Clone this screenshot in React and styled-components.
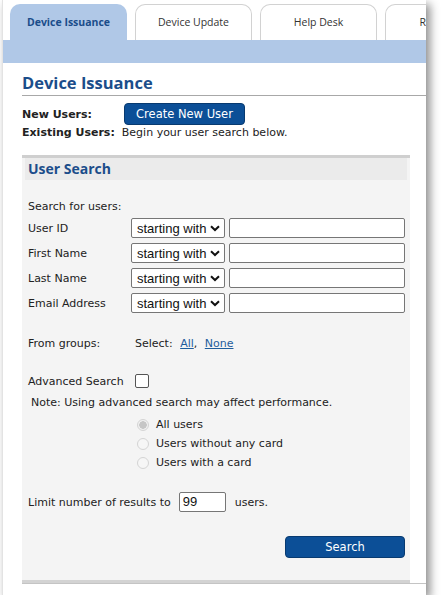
import React from 'react'
import styled, { createGlobalStyle } from 'styled-components'

const GlobalStyle = createGlobalStyle`
  html, body {
    margin: 0;
    padding: 0;
    background: #fff;
  }
  body {
    font-family: "DejaVu Sans", Verdana, sans-serif;
    font-size: 11px;
    color: #222;
  }
`

const tabs = ['Device Issuance', 'Device Update', 'Help Desk', 'Reporting']

const fields = ['User ID', 'First Name', 'Last Name', 'Email Address']

const radios = [
  { label: 'All users', checked: true },
  { label: 'Users without any card' },
  { label: 'Users with a card' },
]

function Chevron() {
  return (
    <svg width="10" height="7" viewBox="0 0 10 7">
      <path d="M1 1.2 L5 5 L9 1.2" fill="none" stroke="#111" strokeWidth="2" />
    </svg>
  )
}

function App() {
  return (
    <>
      <GlobalStyle />
      <Page>
        <TabBar>
          {tabs.map((t, i) => (
            <Tab key={t} active={i === 0}>{t}</Tab>
          ))}
        </TabBar>
        <Band />
        <Main>
          <Title>Device Issuance</Title>
          <NewRow>
            <BoldLabel>New Users:</BoldLabel>
            <CreateButton>Create New User</CreateButton>
          </NewRow>
          <ExistingRow>
            <b>Existing Users:</b>&nbsp; Begin your user search below.
          </ExistingRow>

          <Panel>
            <PanelHeader>User Search</PanelHeader>
            <PanelBody>
              <Line>Search for users:</Line>
              <FieldGrid>
                {fields.map((f) => (
                  <React.Fragment key={f}>
                    <FieldLabel>{f}</FieldLabel>
                    <SelectBox>
                      <span>starting with</span>
                      <Chevron />
                    </SelectBox>
                    <TextBox />
                  </React.Fragment>
                ))}
              </FieldGrid>

              <GroupRow>
                <GroupLabel>From groups:</GroupLabel>
                <span>Select:&nbsp;</span>
                <Link>All</Link>,&nbsp;
                <Link>None</Link>
              </GroupRow>

              <AdvRow>
                <GroupLabel>Advanced Search</GroupLabel>
                <Check />
              </AdvRow>
              <Note>Note: Using advanced search may affect performance.</Note>

              <RadioList>
                {radios.map((r) => (
                  <RadioRow key={r.label}>
                    <Radio checked={r.checked} />
                    <span>{r.label}</span>
                  </RadioRow>
                ))}
              </RadioList>

              <LimitRow>
                Limit number of results to
                <LimitInput>99</LimitInput>
                users.
              </LimitRow>

              <ButtonRow>
                <SearchButton>Search</SearchButton>
              </ButtonRow>
            </PanelBody>
          </Panel>
          <BottomRule />
        </Main>
      </Page>
    </>
  )
}

export default App

const Page = styled.div`
  width: 423px;
  margin-left: 2px;
  height: 595px;
  border-left: 1px solid #e3e3e3;
  background: #fff;
  overflow: hidden;
  box-shadow: 4px 4px 9px rgba(0, 0, 0, 0.45);
`

const TabBar = styled.div`
  display: flex;
  gap: 8px;
  padding: 4px 0 0 7px;
  height: 36px;
  white-space: nowrap;
`

const Tab = styled.div`
  flex: 0 0 117px;
  box-sizing: border-box;
  height: 36px;
  border-radius: 10px 10px 0 0;
  display: flex;
  align-items: center;
  justify-content: center;
  font-family: "Open Sans", sans-serif;
  font-size: 10.5px;
  background: ${(p) => (p.active ? '#b0c8e7' : '#fff')};
  border: ${(p) => (p.active ? 'none' : '1px solid #d2d2d2')};
  border-bottom: none;
  color: ${(p) => (p.active ? '#1b4d8a' : '#333')};
  font-weight: ${(p) => (p.active ? 700 : 400)};
  padding-bottom: 1px;
`

const Band = styled.div`
  height: 23px;
  background: #b0c8e7;
`

const Main = styled.div`
  padding-left: 19px;
`

const Title = styled.div`
  margin-top: 10px;
  line-height: 20px;
  padding-bottom: 2px;
  border-bottom: 1px solid #a8a8a8;
  font-family: "Open Sans", sans-serif;
  font-weight: 700;
  font-size: 16.5px;
  color: #1b4d8a;
`

const NewRow = styled.div`
  display: flex;
  align-items: center;
  margin-top: 7px;
`

const BoldLabel = styled.div`
  width: 102px;
  font-weight: 700;
`

const CreateButton = styled.div`
  width: 121px;
  height: 22px;
  box-sizing: border-box;
  border-radius: 4px;
  background: #0c4f97;
  border: 1px solid #083a70;
  color: #fff;
  font-size: 11.5px;
  display: flex;
  align-items: center;
  justify-content: center;
`

const ExistingRow = styled.div`
  margin-top: 1px;
  line-height: 14px;
`

const Panel = styled.div`
  margin-top: 15px;
  width: 388px;
  box-sizing: border-box;
  padding: 0 3px 22px;
  background: #f4f4f4;
  border-top: 3px solid #cfcfcf;
  border-bottom: 3px solid #d3d3d3;
`

const PanelHeader = styled.div`
  height: 22px;
  line-height: 22px;
  padding-left: 3px;
  background: #ebebeb;
  font-family: "Open Sans", sans-serif;
  font-weight: 700;
  font-size: 14px;
  color: #1b4d8a;
`

const PanelBody = styled.div`
  padding: 20px 2px 0 3px;
`

const Line = styled.div`
  line-height: 14px;
`

const FieldGrid = styled.div`
  margin-top: 4px;
  display: grid;
  grid-template-columns: 99px 94px 176px;
  column-gap: 4px;
  row-gap: 5px;
  align-items: center;
`

const FieldLabel = styled.div`
  height: 20px;
  line-height: 21px;
`

const SelectBox = styled.div`
  height: 20px;
  box-sizing: border-box;
  border: 1px solid #767676;
  border-radius: 2px;
  background: #fff;
  display: flex;
  align-items: center;
  justify-content: space-between;
  padding: 0 4px 0 5px;
  font-family: "Liberation Sans", Arial, sans-serif;
  font-size: 13px;
  color: #111;
`

const TextBox = styled.div`
  height: 20px;
  box-sizing: border-box;
  border: 1px solid #767676;
  border-radius: 2px;
  background: #fff;
`

const GroupRow = styled.div`
  display: flex;
  align-items: center;
  margin-top: 24px;
  line-height: 14px;
`

const GroupLabel = styled.div`
  width: 107px;
`

const Link = styled.span`
  color: #1f5d9c;
  text-decoration: underline;
  margin-left: 4px;
`

const AdvRow = styled.div`
  display: flex;
  align-items: center;
  margin-top: 23px;
  height: 14px;
`

const Check = styled.div`
  width: 12px;
  height: 12px;
  border: 1px solid #555;
  border-radius: 2px;
  background: #fff;
`

const Note = styled.div`
  margin-top: 8px;
  padding-left: 3px;
  line-height: 14px;
`

const RadioList = styled.div`
  margin-top: 5px;
  padding-left: 109px;
`

const RadioRow = styled.div`
  display: flex;
  align-items: center;
  gap: 7px;
  height: 19px;
`

const Radio = styled.div`
  width: 12px;
  height: 12px;
  box-sizing: border-box;
  border-radius: 50%;
  border: 1px solid #d4d4d4;
  background: ${(p) =>
    p.checked ? 'radial-gradient(circle, #c6c6c6 0 3.5px, #f0f0f0 4px)' : '#f6f6f6'};
`

const LimitRow = styled.div`
  display: flex;
  align-items: center;
  margin-top: 20px;
  height: 20px;
`

const LimitInput = styled.div`
  width: 47px;
  height: 20px;
  box-sizing: border-box;
  margin: 0 9px 0 8px;
  border: 1px solid #767676;
  border-radius: 2px;
  background: #fff;
  padding-left: 3px;
  font-family: "Liberation Sans", Arial, sans-serif;
  font-size: 13px;
  line-height: 18px;
  color: #111;
`

const ButtonRow = styled.div`
  display: flex;
  justify-content: flex-end;
  margin-top: 24px;
`

const SearchButton = styled.div`
  width: 120px;
  height: 22px;
  box-sizing: border-box;
  border-radius: 4px;
  background: #0c4f97;
  border: 1px solid #083a70;
  color: #fff;
  font-size: 11.5px;
  display: flex;
  align-items: center;
  justify-content: center;
`

const BottomRule = styled.div`
  border-top: 1px solid #c4c4c4;
`
